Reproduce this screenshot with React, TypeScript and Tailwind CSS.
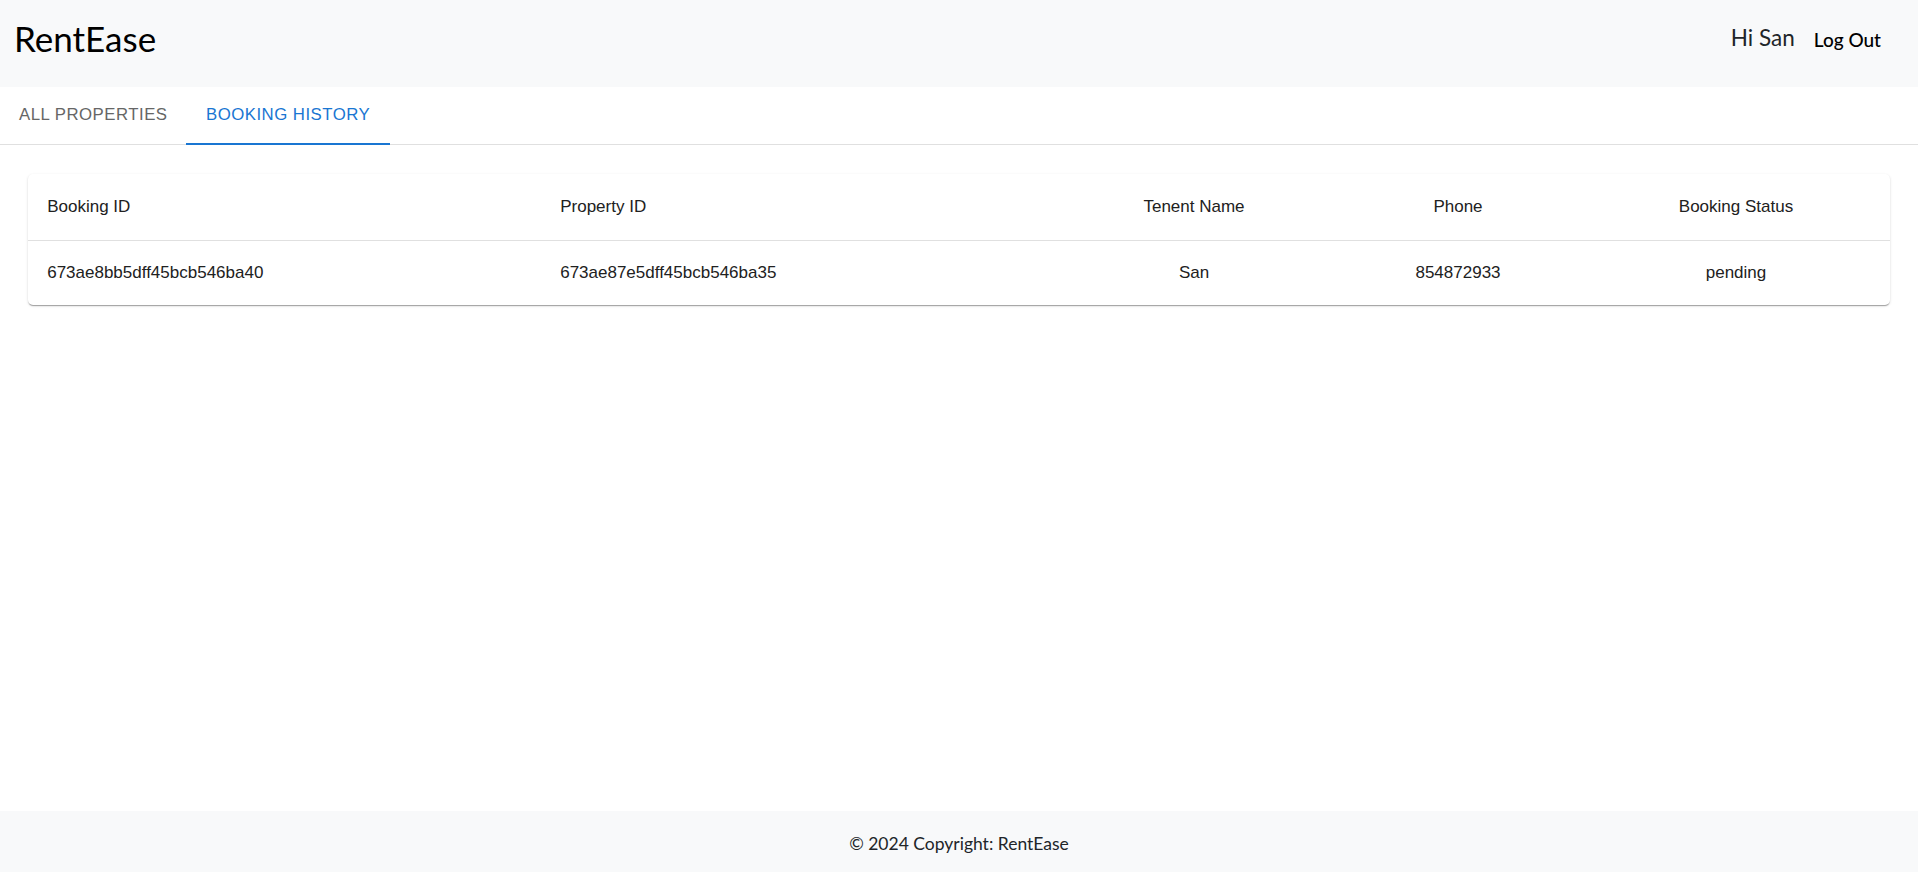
import React from "react";

const gill = { fontFamily: '"Gill Sans", "Gill Sans MT", Lato, "Noto Sans", sans-serif' };

export default function App() {
  const cellBase = "px-[19.2px] text-[17px] text-[#212121]";
  return (
    <div className="min-h-screen flex flex-col bg-white" style={{ fontFamily: '"Liberation Sans", Arial, sans-serif' }}>
      <header className="h-[87px] bg-[#f8f9fa] flex items-center justify-between pl-[14px] pr-[37px]">
        <div className="text-[35px] text-black leading-none pb-[10px]" style={gill}>RentEase</div>
        <div className="flex items-center gap-[19px] pb-[10px]" style={gill}>
          <span className="text-[22.5px] text-[#212529] leading-none">Hi San</span>
          <span className="text-[19px] font-medium text-black leading-none pt-[2px]">Log Out</span>
        </div>
      </header>

      <nav className="flex border-b border-[#e0e0e0] h-[58px]">
        <div className="h-full flex items-center px-[19px] pb-[2px] text-[16.8px] tracking-[0.48px] text-[#666666] uppercase">
          All Properties
        </div>
        <div className="relative h-full flex items-center px-[19.5px] pb-[2px] text-[16.8px] tracking-[0.48px] text-[#1976d2] uppercase">
          Booking History
          <div className="absolute left-0 right-0 bottom-[-1px] h-[2.4px] bg-[#1976d2]" />
        </div>
      </nav>

      <main className="flex-1 px-[28px] pt-[29px]">
        <div className="bg-white rounded-[5px] shadow-[0_2px_1px_-1px_rgba(0,0,0,0.2),0_1px_1px_0_rgba(0,0,0,0.14),0_1px_3px_0_rgba(0,0,0,0.12)] overflow-hidden">
          <div className="grid grid-cols-[513px_513px_280px_248px_1fr] h-[67px] items-center border-b border-[#e0e0e0]">
            <div className={cellBase}>Booking ID</div>
            <div className={cellBase}>Property ID</div>
            <div className={cellBase + " text-center"}>Tenent Name</div>
            <div className={cellBase + " text-center"}>Phone</div>
            <div className={cellBase + " text-center"}>Booking Status</div>
          </div>
          <div className="grid grid-cols-[513px_513px_280px_248px_1fr] h-[64px] items-center">
            <div className={cellBase}>673ae8bb5dff45bcb546ba40</div>
            <div className={cellBase}>673ae87e5dff45bcb546ba35</div>
            <div className={cellBase + " text-center"}>San</div>
            <div className={cellBase + " text-center"}>854872933</div>
            <div className={cellBase + " text-center"}>pending</div>
          </div>
        </div>
      </main>

      <footer className="h-[61px] bg-[#f8f9fa] flex items-center justify-center">
        <span className="text-[17.5px] text-[#212529] pt-[6px]" style={gill}>© 2024 Copyright: RentEase</span>
      </footer>
    </div>
  );
}
